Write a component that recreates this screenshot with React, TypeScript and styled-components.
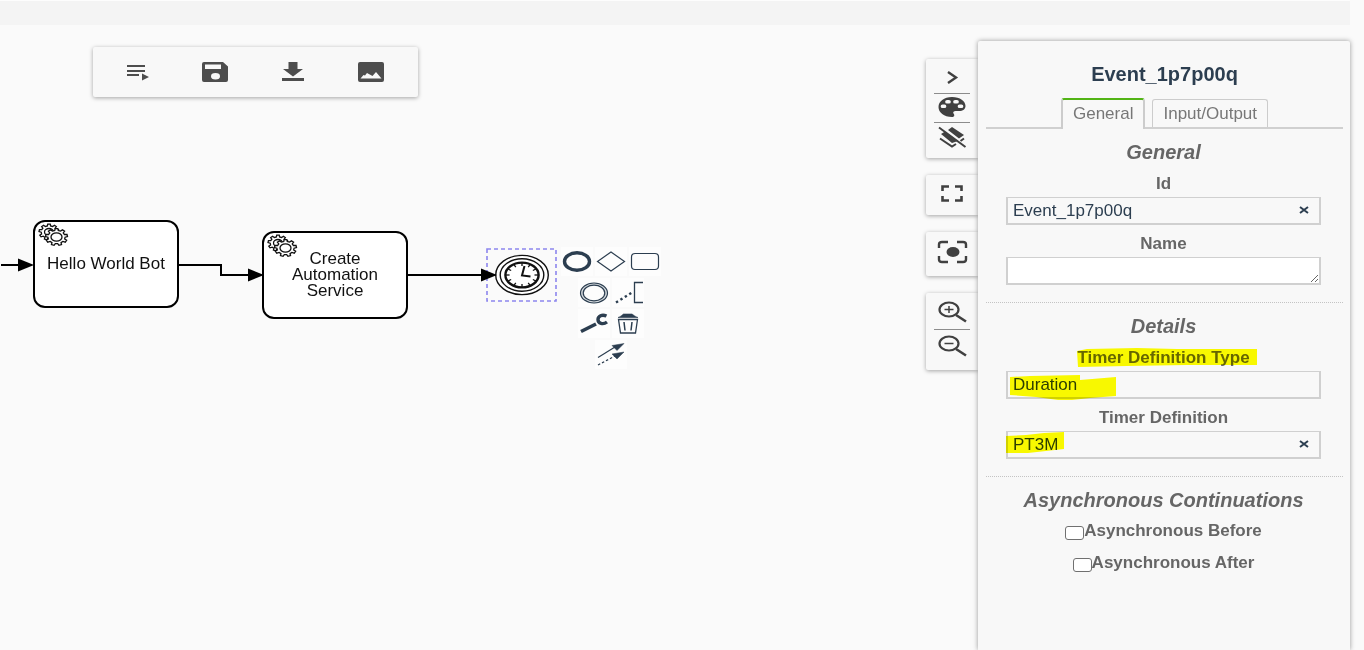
import React from "react";
import styled, { createGlobalStyle, css } from "styled-components";

const GlobalStyle = createGlobalStyle`
  *, *::before, *::after { box-sizing: border-box; }
  body {
    margin: 0;
    background: #fafafa;
    font-family: "Liberation Sans", Arial, sans-serif;
  }
  button, input, select, textarea { font: inherit; color: inherit; }
`;

const ink = "#2c3e50";

const Page = styled.div`
  display: flex;
  flex-direction: column;
  min-height: 100vh;
  overflow-x: hidden;
`;

const TopBar = styled.header`
  height: 25px;
  margin-right: 14px;
  background: #f4f4f4;
  border-top: 1px solid #fdfdfd;
`;

const Workspace = styled.main`
  flex: 1;
  display: flex;
  align-items: stretch;
  padding-right: 14px;
`;

const Canvas = styled.section`
  position: relative;
  flex: 1;
  min-width: 0;
`;

const raised = css`
  background: #f8f8f8;
  box-shadow: 0 1px 4px rgba(0, 0, 0, 0.35);
`;

const Toolbar = styled.div`
  ${raised}
  position: relative;
  display: flex;
  width: max-content;
  margin: 22px 0 0 93px;
  padding: 0 8px 0 5px;
  border-radius: 2px;
`;

const ToolButton = styled.button`
  display: flex;
  align-items: center;
  justify-content: center;
  width: 78px;
  height: 50px;
  padding: 0;
  border: 0;
  background: none;
  color: #4d4d4d;
`;

const Connections = styled.svg`
  position: absolute;
  top: 0;
  left: 0;
  pointer-events: none;
`;

const Task = styled.div<{ $x: number; $y: number }>`
  position: absolute;
  left: ${(p) => p.$x}px;
  top: ${(p) => p.$y}px;
  display: flex;
  align-items: center;
  justify-content: center;
  width: 146px;
  height: 88px;
  padding: 0 8px;
  border: 2px solid #000;
  border-radius: 12px;
  background: #fff;
  font-size: 17px;
  line-height: 16px;
  text-align: center;
  color: #111;
`;

const TaskMarker = styled.svg`
  position: absolute;
  top: 1px;
  left: 3px;
`;

const TimerEvent = styled.div`
  position: absolute;
  left: 486px;
  top: 223px;
`;

const ContextPad = styled.div`
  position: absolute;
  left: 560px;
  top: 222px;
  width: 102px;
`;

const PadRow = styled.div`
  display: flex;
  justify-content: center;
  gap: 2px;
  height: 31px;
`;

const PadButton = styled.button`
  width: 32px;
  height: 29px;
  padding: 0;
  border: 0;
  background: #fdfdfd;
  color: ${ink};
  svg { display: block; }
`;

const SideRail = styled.aside`
  display: flex;
  flex-direction: column;
  gap: 17px;
  width: 52px;
  padding-top: 34px;
`;

const RailGroup = styled.div`
  ${raised}
  display: flex;
  flex-direction: column;
  padding: 3px 8px 6px;
  border-radius: 2px 0 0 2px;
`;

const RailButton = styled.button<{ $height: number }>`
  display: flex;
  align-items: center;
  justify-content: center;
  height: ${(p) => p.$height}px;
  padding: 0 0 2px;
  border: 0;
  background: none;
  color: #404040;
  & + & { border-top: 1px solid #8c8c8c; }
`;

const Panel = styled.form`
  ${raised}
  position: relative;
  flex: none;
  width: 372px;
  margin-top: 16px;
  padding: 21px 7px 0 8px;
  border-radius: 2px 2px 0 0;
  box-shadow: 0 0 5px rgba(0, 0, 0, 0.4);
  text-align: center;
  color: #666;
`;

const PanelTitle = styled.h1`
  margin: 0;
  font-size: 20px;
  line-height: 24px;
  color: ${ink};
`;

const Tabs = styled.div`
  display: flex;
  justify-content: center;
  align-items: flex-end;
  gap: 7px;
  height: 43px;
  border-bottom: 2px solid #d0d0d0;
`;

const Tab = styled.button<{ $active?: boolean }>`
  height: ${(p) => (p.$active ? 31 : 28)}px;
  margin-bottom: ${(p) => (p.$active ? -2 : 0)}px;
  padding: 0 10px;
  border: 1px solid #ccc;
  border-bottom: 0;
  border-radius: 3px 3px 0 0;
  background: #f8f8f8;
  font-size: 17px;
  line-height: 20px;
  color: #777;
  ${(p) =>
    p.$active &&
    css`
      border-top: 2px solid #52b415;
      border-left-width: 2px;
      border-right-width: 2px;
      padding-bottom: 2px;
    `}
`;

const Section = styled.section`
  padding: 11px 22px 17px 20px;
  & + & { border-top: 1px dotted #c4c4c4; }
`;

const SectionTitle = styled.h2`
  margin: 0 -10px 9px;
  font-size: 20px;
  line-height: 24px;
  font-style: italic;
`;

const Field = styled.div`
  & + & { margin-top: 8px; }
`;

const FieldLabel = styled.label`
  position: relative;
  display: block;
  width: max-content;
  margin: 0 auto 3px;
  font-size: 17px;
  line-height: 21px;
  font-weight: bold;
`;

const Control = styled.div`
  position: relative;
  display: flex;
`;

const box = css`
  display: block;
  width: 100%;
  height: 28px;
  margin: 0;
  padding: 0 5px;
  border: 2px solid #d0d0d0;
  border-top-width: 1px;
  border-radius: 0;
  outline: none;
  background: #f8f8f8;
  font-size: 17px;
  color: ${ink};
`;

const TextInput = styled.input`${box}`;
const TextArea = styled.textarea`
  ${box}
  background: #fff;
  resize: vertical;
`;
const Select = styled.select`
  ${box}
  appearance: none;
`;

const ClearButton = styled.button`
  position: absolute;
  top: 0;
  right: 8px;
  display: flex;
  align-items: center;
  justify-content: center;
  width: 18px;
  height: 26px;
  padding: 0;
  border: 0;
  background: none;
  color: ${ink};
`;

const Marker = styled.svg`
  position: absolute;
  top: 0;
  left: 0;
  overflow: visible;
  mix-blend-mode: multiply;
  pointer-events: none;
`;

const CheckRow = styled.label`
  display: flex;
  align-items: center;
  justify-content: center;
  height: 20px;
  font-size: 17px;
  line-height: 20px;
  font-weight: bold;
  & + & { margin-top: 12px; }
`;

const CheckBox = styled.input`
  appearance: none;
  width: 19px;
  height: 14px;
  margin: 3px 0 0;
  border: 1px solid #707070;
  border-radius: 3px;
  background: #fff;
`;

function gearPath(cx: number, cy: number, rx: number, ry: number) {
  const teeth = 9;
  const steps = [
    [-0.3, 0.78],
    [-0.18, 1],
    [0.18, 1],
    [0.3, 0.78],
  ];
  const points: string[] = [];
  for (let i = 0; i < teeth; i++) {
    for (const [offset, r] of steps) {
      const a = ((i + offset) / teeth) * Math.PI * 2 - Math.PI / 2;
      points.push(`${(cx + Math.cos(a) * rx * r).toFixed(2)} ${(cy + Math.sin(a) * ry * r).toFixed(2)}`);
    }
  }
  return `M${points.join("L")}Z`;
}

function Gears() {
  return (
    <TaskMarker
      width="32"
      height="24"
      viewBox="0 0 32 24"
      fill="#fff"
      stroke="#111"
      strokeWidth="1.3"
      aria-hidden="true"
    >
      <path d={gearPath(11, 9, 10, 8)} />
      <ellipse cx="11" cy="9" rx="4.5" ry="3.5" />
      <path d={gearPath(18.5, 14, 11, 8.5)} />
      <ellipse cx="18.5" cy="14" rx="5.5" ry="4.2" />
    </TaskMarker>
  );
}

function TimerSymbol() {
  const ticks = Array.from({ length: 12 }, (_, i) => {
    const a = (i * Math.PI) / 6;
    return (
      <line
        key={i}
        x1={36 + Math.cos(a) * 12.5}
        y1={27 + Math.sin(a) * 9}
        x2={36 + Math.cos(a) * 16}
        y2={27 + Math.sin(a) * 12}
        strokeWidth="1.3"
      />
    );
  });
  return (
    <svg width="72" height="56" viewBox="0 0 72 56" fill="none" stroke="#111" role="img" aria-label="Timer event">
      <rect x="1" y="1" width="69" height="52" stroke="#8d86ee" strokeWidth="1.6" strokeDasharray="4 3" />
      <ellipse cx="36" cy="27" rx="26.3" ry="19.6" fill="#fff" strokeWidth="1.4" />
      <ellipse cx="36" cy="27" rx="21.8" ry="16.2" strokeWidth="1.4" />
      <ellipse cx="36" cy="27" rx="16.6" ry="12.4" strokeWidth="2.4" />
      {ticks}
      <path d="M38.5 18L36 27.5L44.5 28.5" strokeWidth="2" />
    </svg>
  );
}

const padShapes: Record<string, React.ReactNode> = {
  end: <ellipse cx="16" cy="14.5" rx="12.5" ry="8.8" strokeWidth="3.4" />,
  gateway: <path d="M16 5L29.5 14.5L16 24L2.5 14.5Z" strokeWidth="1.2" />,
  task: <rect x="2.5" y="6.5" width="27" height="16" rx="3.5" strokeWidth="1.2" />,
  intermediate: (
    <>
      <ellipse cx="16" cy="15" rx="12.2" ry="9" stroke="#d5dade" strokeWidth="2" />
      <ellipse cx="16" cy="15" rx="13.5" ry="10" strokeWidth="1.2" />
      <ellipse cx="16" cy="15" rx="10.8" ry="7.8" strokeWidth="1.2" />
    </>
  ),
  annotation: (
    <>
      <path d="M31 4.5H22.5V24.5H31" strokeWidth="1.3" />
      <path d="M4 24.5L20 14.5" strokeWidth="2.4" strokeDasharray="2.4 2.8" />
    </>
  ),
  wrench: (
    <>
      <path d="M3 22.5L18 15" strokeWidth="3.6" />
      <path d="M28.5 7C24 5 20 7 20 10.5C20 14.5 25 16 29 13" strokeWidth="3.4" />
    </>
  ),
  trash: (
    <>
      <path d="M6 8.5C9 7.5 10 6 11.5 5H20C21.5 6 23 7.5 26 8.5Z" fill="currentColor" strokeWidth="0.6" />
      <path d="M6.5 10.5H25.5L23.5 24H8.5Z" strokeWidth="1.3" />
      <path d="M12 13L13 21.5M20 13L19 21.5" strokeWidth="1.5" />
    </>
  ),
  connect: (
    <>
      <path d="M3 17.5L20 7" strokeWidth="1.2" />
      <path d="M29 3.5L17 5.5L22 10.5Z" fill="currentColor" strokeWidth="0.5" />
      <path d="M3 25L20 16" strokeWidth="1.2" strokeDasharray="2.5 2" />
      <path d="M29 12L17 14L22 19Z" fill="currentColor" strokeWidth="0.5" />
    </>
  ),
};

const padRows = [
  [["end", "Append end event"], ["gateway", "Append gateway"], ["task", "Append task"]],
  [["intermediate", "Append intermediate event"], ["annotation", "Append text annotation"]],
  [["wrench", "Change type"], ["trash", "Remove"]],
  [["connect", "Connect"]],
];

const toolIcons: [string, React.ReactNode][] = [
  ["Run", <path key="i" d="M4 5H22V7H4ZM4 10H22V12H4ZM4 14H16V16H4ZM19 13.5L26 17L19 20.5Z" />],
  [
    "Save",
    <path
      key="i"
      fillRule="evenodd"
      d="M3 2H22L27 6.5V20Q27 22 25 22H3Q1 22 1 20V4Q1 2 3 2ZM4 4.5V9H20V4.5ZM14.5 13A4.500 3.200 0 1 0 14.5 19.4A4.500 3.200 0 1 0 14.5 13Z"
    />,
  ],
  ["Download", <path key="i" d="M9.5 2H18.5V9H24L14 16.5L4 9H9.5ZM3 18H25V21H3Z" />],
  [
    "Save image",
    <path
      key="i"
      fillRule="evenodd"
      d="M3 2H25Q27 2 27 4V20Q27 22 25 22H3Q1 22 1 20V4Q1 2 3 2ZM3.500 18.5H24.5L19 12L15.5 16L10 13L8 15.5L6.5 15Z"
    />,
  ],
];

function RailIcon({ children }: { children: React.ReactNode }) {
  return (
    <svg width="32" height="26" viewBox="0 0 32 26" fill="none" stroke="currentColor" aria-hidden="true">
      {children}
    </svg>
  );
}

function ClearIcon() {
  return (
    <svg width="10" height="8" viewBox="0 0 10 8" stroke="currentColor" strokeWidth="2" aria-hidden="true">
      <path d="M1 1L9 7M9 1L1 7" />
    </svg>
  );
}

export default function App() {
  return (
    <Page>
      <GlobalStyle />
      <TopBar />
      <Workspace>
        <Canvas aria-label="Process diagram">
          <Toolbar>
            {toolIcons.map(([label, icon]) => (
              <ToolButton key={label} aria-label={label}>
                <svg width="28" height="24" viewBox="0 0 28 24" fill="currentColor">
                  {icon}
                </svg>
              </ToolButton>
            ))}
          </Toolbar>

          <Connections width="560" height="320" viewBox="0 0 560 320" fill="none" stroke="#000" strokeWidth="2" aria-hidden="true">
            <path d="M1 240H22M178 240H221V250H252M407 250H486" />
            <g fill="#000" stroke="none">
              <path d="M18 233.5L34 240L18 246.5Z" />
              <path d="M248 243.5L264 250L248 256.5Z" />
            </g>
          </Connections>

          <Task $x={33} $y={195}>
            <Gears />
            Hello World Bot
          </Task>
          <Task $x={262} $y={206}>
            <Gears />
            Create Automation Service
          </Task>

          <TimerEvent>
            <TimerSymbol />
          </TimerEvent>
          <Connections width="560" height="320" viewBox="0 0 560 320" aria-hidden="true">
            <path d="M481 243.5L497 250L481 256.5Z" />
          </Connections>

          <ContextPad>
            {padRows.map((row, i) => (
              <PadRow key={i}>
                {row.map(([name, label]) => (
                  <PadButton key={name} aria-label={label}>
                    <svg width="32" height="29" viewBox="0 0 32 29" fill="none" stroke="currentColor">
                      {padShapes[name]}
                    </svg>
                  </PadButton>
                ))}
              </PadRow>
            ))}
          </ContextPad>
        </Canvas>

        <SideRail>
          <RailGroup>
            <RailButton $height={31} aria-label="Collapse panel">
              <RailIcon>
                <path d="M12 8L20 13.5L12 19" strokeWidth="2.4" />
              </RailIcon>
            </RailButton>
            <RailButton $height={29} aria-label="Colors">
              <RailIcon>
                <path
                  fill="currentColor"
                  stroke="none"
                  fillRule="evenodd"
                  d="M16 3C8 3 2.5 7.5 2.5 13C2.5 18.5 8 23 16 23C19 23 18.5 20.5 17.5 19.5C16.5 18 18 17 19.5 17H23C27 17 29.5 15 29.5 12C29.5 7 24 3 16 3ZM7.5 10.5A2.3 1.8 0 1 1 7.5 14A2.3 1.8 0 1 1 7.5 10.5ZM12 6A2.3 1.8 0 1 1 12 9.5A2.3 1.8 0 1 1 12 6ZM20 6A2.3 1.8 0 1 1 20 9.5A2.3 1.8 0 1 1 20 6ZM24.5 10.5A2.3 1.8 0 1 1 24.5 14A2.3 1.8 0 1 1 24.5 10.5Z"
                />
              </RailIcon>
            </RailButton>
            <RailButton $height={30} aria-label="Hide overlays">
              <RailIcon>
                <path fill="currentColor" stroke="none" d="M12 6L16 3L28 11L23 14.5ZM5 10L9 7.5L22 17L16 19Z" />
                <path d="M4 14.5L16 22.5L20 20M24.5 17L28 14.5" strokeWidth="2" />
                <path d="M3 3.5L29.5 23" strokeWidth="2" />
              </RailIcon>
            </RailButton>
          </RailGroup>
          <RailGroup>
            <RailButton $height={31} aria-label="Fullscreen">
              <RailIcon>
                <path d="M6.5 11V6.5H13M19 6.5H25.5V11M25.5 16V20.5H19M13 20.5H6.5V16" strokeWidth="2.6" />
              </RailIcon>
            </RailButton>
          </RailGroup>
          <RailGroup>
            <RailButton $height={35} aria-label="Center diagram">
              <RailIcon>
                <path
                  d="M3 9V5.5Q3 3 6 3H12M21 3H27Q30 3 30 5.5V9M30 17V20.5Q30 23 27 23H21M12 23H6Q3 23 3 20.5V17"
                  strokeWidth="2.4"
                />
                <ellipse cx="17" cy="13" rx="6.5" ry="5" fill="currentColor" stroke="none" />
              </RailIcon>
            </RailButton>
          </RailGroup>
          <RailGroup>
            <RailButton $height={33} aria-label="Zoom in">
              <RailIcon>
                <ellipse cx="13" cy="10.5" rx="9.5" ry="7" strokeWidth="2.2" />
                <path d="M20 16L30 22.5" strokeWidth="2.6" />
                <path d="M8.5 10.5H17.5M13 7V14" strokeWidth="1.5" />
              </RailIcon>
            </RailButton>
            <RailButton $height={35} aria-label="Zoom out">
              <RailIcon>
                <ellipse cx="13" cy="10.5" rx="9.5" ry="7" strokeWidth="2.2" />
                <path d="M20 16L30 22.5" strokeWidth="2.6" />
                <path d="M8.5 10.5H17.5" strokeWidth="1.5" />
              </RailIcon>
            </RailButton>
          </RailGroup>
        </SideRail>

        <Panel onSubmit={(e) => e.preventDefault()}>
          <PanelTitle>Event_1p7p00q</PanelTitle>
          <Tabs role="tablist">
            <Tab type="button" role="tab" aria-selected="true" $active>
              General
            </Tab>
            <Tab type="button" role="tab" aria-selected="false">
              Input/Output
            </Tab>
          </Tabs>

          <Section>
            <SectionTitle>General</SectionTitle>
            <Field>
              <FieldLabel htmlFor="element-id">Id</FieldLabel>
              <Control>
                <TextInput id="element-id" defaultValue="Event_1p7p00q" />
                <ClearButton type="button" aria-label="Clear id">
                  <ClearIcon />
                </ClearButton>
              </Control>
            </Field>
            <Field>
              <FieldLabel htmlFor="element-name">Name</FieldLabel>
              <Control>
                <TextArea id="element-name" rows={1} />
              </Control>
            </Field>
          </Section>

          <Section>
            <SectionTitle>Details</SectionTitle>
            <Field>
              <FieldLabel htmlFor="timer-type">
                Timer Definition Type
                <Marker width="180" height="21" viewBox="0 0 180 21" fill="#ffff00" aria-hidden="true">
                  <path d="M0 4L10 2L60 1L100 2L180 2V18H110L50 19L1 20Z" />
                </Marker>
              </FieldLabel>
              <Control>
                <Select id="timer-type" defaultValue="Duration">
                  <option>Duration</option>
                </Select>
                <Marker width="112" height="32" viewBox="0 0 112 32" fill="#ffff00" aria-hidden="true">
                  <path d="M4 6L24 5L74 4V9L110 6V25L84 27L66 29L52 29L30 26L4 24Z" />
                </Marker>
              </Control>
            </Field>
            <Field>
              <FieldLabel htmlFor="timer-definition">Timer Definition</FieldLabel>
              <Control>
                <TextInput id="timer-definition" defaultValue="PT3M" />
                <ClearButton type="button" aria-label="Clear timer definition">
                  <ClearIcon />
                </ClearButton>
                <Marker width="60" height="28" viewBox="0 0 60 28" fill="#ffff00" aria-hidden="true">
                  <path d="M0 5L20 4L38 2L58 1V18L40 20L22 22L0 22Z" />
                </Marker>
              </Control>
            </Field>
          </Section>

          <Section>
            <SectionTitle>Asynchronous Continuations</SectionTitle>
            <CheckRow>
              <CheckBox type="checkbox" />
              Asynchronous Before
            </CheckRow>
            <CheckRow>
              <CheckBox type="checkbox" />
              Asynchronous After
            </CheckRow>
          </Section>
        </Panel>
      </Workspace>
    </Page>
  );
}
